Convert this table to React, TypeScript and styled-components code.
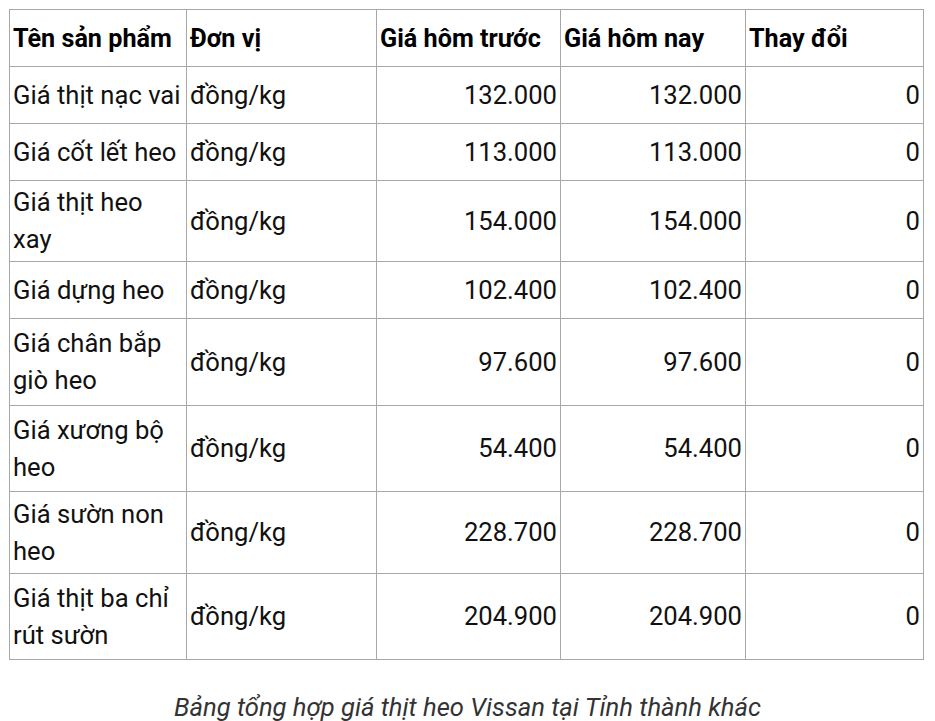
import React from 'react';
import styled, { createGlobalStyle } from 'styled-components';

const GlobalStyle = createGlobalStyle`
  html, body {
    margin: 0;
    padding: 0;
    background: #ffffff;
  }
  body {
    font-family: Roboto, "Noto Sans", "Liberation Sans", sans-serif;
    color: #111111;
  }
`;

const Page = styled.div`
  width: 935px;
  padding: 9px 0 0 9px;
  box-sizing: border-box;
`;

const PriceTable = styled.table`
  border-collapse: collapse;
  table-layout: fixed;
  width: 914px;
  font-size: 25.6px;
  line-height: 37px;
`;

const Row = styled.tr<{ $h: number }>`
  height: ${(p) => p.$h}px;
`;

const HeadCell = styled.th`
  border: 1px solid #a8a8a8;
  padding: 0 3px;
  text-align: left;
  font-weight: 700;
  font-size: 25.2px;
  vertical-align: middle;
  color: #000000;
`;

const Cell = styled.td<{ $num?: boolean }>`
  border: 1px solid #a8a8a8;
  padding: 0 3px;
  text-align: ${(p) => (p.$num ? 'right' : 'left')};
  vertical-align: middle;
  color: #111111;
`;

const Caption = styled.p`
  margin: 32px 0 0;
  padding-right: 9px;
  text-align: center;
  font-style: italic;
  font-size: 25.6px;
  color: #333333;
`;

const rows = [
  { name: 'Giá thịt nạc vai', prev: '132.000', now: '132.000', h: 57 },
  { name: 'Giá cốt lết heo', prev: '113.000', now: '113.000', h: 57 },
  { name: 'Giá thịt heo xay', prev: '154.000', now: '154.000', h: 81 },
  { name: 'Giá dựng heo', prev: '102.400', now: '102.400', h: 57 },
  { name: 'Giá chân bắp giò heo', prev: '97.600', now: '97.600', h: 87 },
  { name: 'Giá xương bộ heo', prev: '54.400', now: '54.400', h: 86 },
  { name: 'Giá sườn non heo', prev: '228.700', now: '228.700', h: 82 },
  { name: 'Giá thịt ba chỉ rút sườn', prev: '204.900', now: '204.900', h: 86 },
];

const App: React.FC = () => {
  return (
    <Page>
      <GlobalStyle />
      <PriceTable>
        <colgroup>
          <col style={{ width: 177 }} />
          <col style={{ width: 190 }} />
          <col style={{ width: 184 }} />
          <col style={{ width: 185 }} />
          <col style={{ width: 178 }} />
        </colgroup>
        <thead>
          <Row $h={57}>
            <HeadCell>Tên sản phẩm</HeadCell>
            <HeadCell>Đơn vị</HeadCell>
            <HeadCell>Giá hôm trước</HeadCell>
            <HeadCell>Giá hôm nay</HeadCell>
            <HeadCell>Thay đổi</HeadCell>
          </Row>
        </thead>
        <tbody>
          {rows.map((r) => (
            <Row key={r.name} $h={r.h}>
              <Cell>{r.name}</Cell>
              <Cell>đồng/kg</Cell>
              <Cell $num>{r.prev}</Cell>
              <Cell $num>{r.now}</Cell>
              <Cell $num>0</Cell>
            </Row>
          ))}
        </tbody>
      </PriceTable>
      <Caption>Bảng tổng hợp giá thịt heo Vissan tại Tỉnh thành khác</Caption>
    </Page>
  );
};

export default App;
